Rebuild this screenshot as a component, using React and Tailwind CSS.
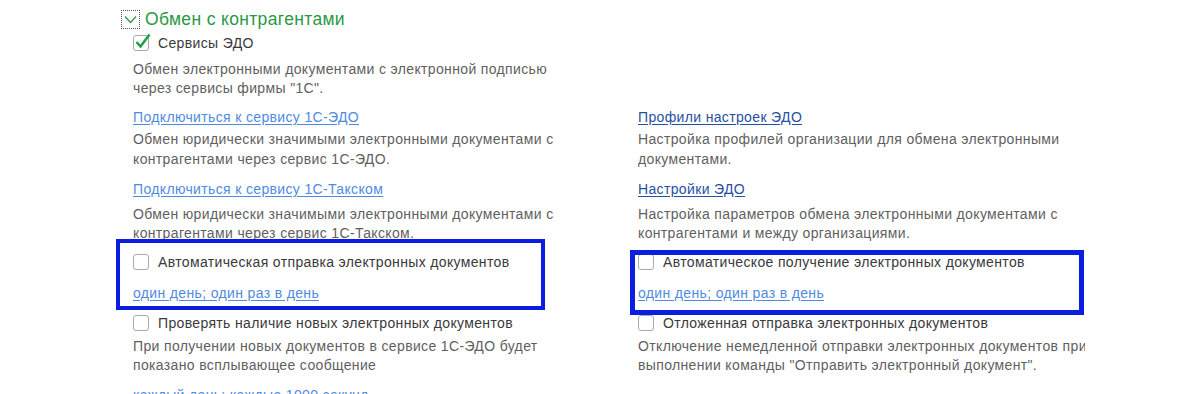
const font = { fontFamily: '"Liberation Sans", Arial, sans-serif' }

function Box({ checked }) {
  return (
    <span className="relative inline-block h-4 w-4 shrink-0 rounded-[3px] border border-[#a9a9a9] bg-white">
      {checked && (
        <svg className="absolute -left-[1px] -top-[4px]" width="19" height="19" viewBox="0 0 19 19">
          <path d="M3.5 10 L7.5 14.5 L16.5 2.5" fill="none" stroke="#21a047" strokeWidth="2.6" />
        </svg>
      )}
    </span>
  )
}

function Check({ label, checked }) {
  return (
    <div className="flex h-5 items-center gap-[9px] text-[14px] text-[#3a3a3a]">
      <Box checked={checked} />
      <span>{label}</span>
    </div>
  )
}

function Link({ children, dark }) {
  return (
    <div className={`flex h-5 items-center text-[14px] underline underline-offset-2 ${dark ? 'text-[#27509f] decoration-[#27509f]' : 'text-[#4f8be2] decoration-[#4f8be2]'}`}>
      {children}
    </div>
  )
}

function Desc({ children, lead = 'leading-[19px]' }) {
  return <div className={`whitespace-nowrap text-[14px] text-[#5f5f5f] ${lead}`}>{children}</div>
}

function Row({ mt, left, right }) {
  return (
    <div className={`grid grid-cols-[505px_447px] ${mt}`}>
      <div>{left}</div>
      <div className="overflow-hidden">{right}</div>
    </div>
  )
}

export default function App() {
  return (
    <div className="relative h-[394px] w-[1200px] overflow-hidden bg-white tracking-[0.35px]" style={font}>
      <div className="pl-[121px] pt-[8px]">
        <div className="flex h-[22px] items-center gap-[5px]">
          <span className="flex h-[19px] w-[19px] items-center justify-center border border-dotted border-[#555]">
            <svg width="13" height="9" viewBox="0 0 13 9">
              <path d="M1 1.5 L6.5 7.5 L12 1.5" fill="none" stroke="#2e9a4a" strokeWidth="1.4" />
            </svg>
          </span>
          <span className="text-[17.5px] text-[#2a9844]">Обмен с контрагентами</span>
        </div>
        <div className="pl-[12px]">
          <div className="mt-[3px]">
            <Check label="Сервисы ЭДО" checked />
          </div>
          <div className="mt-[7px]">
            <Desc>
              Обмен электронными документами с электронной подписью
              <br />
              через сервисы фирмы "1С".
            </Desc>
          </div>
          <Row
            mt="mt-[9px]"
            left={<Link>Подключиться к сервису 1С-ЭДО</Link>}
            right={<Link dark>Профили настроек ЭДО</Link>}
          />
          <Row
            mt="mt-[2px]"
            left={
              <Desc lead="leading-[20px]">
                Обмен юридически значимыми электронными документами с
                <br />
                контрагентами через сервис 1С-ЭДО.
              </Desc>
            }
            right={
              <Desc lead="leading-[20px]">
                Настройка профилей организации для обмена электронными
                <br />
                документами.
              </Desc>
            }
          />
          <Row
            mt="mt-[10px]"
            left={<Link>Подключиться к сервису 1С-Такском</Link>}
            right={<Link dark>Настройки ЭДО</Link>}
          />
          <Row
            mt="mt-[6px]"
            left={
              <Desc>
                Обмен юридически значимыми электронными документами с
                <br />
                контрагентами через сервис 1С-Такском.
              </Desc>
            }
            right={
              <Desc>
                Настройка параметров обмена электронными документами с
                <br />
                контрагентами и между организациями.
              </Desc>
            }
          />
          <Row
            mt="mt-[9px]"
            left={<Check label="Автоматическая отправка электронных документов" />}
            right={<Check label="Автоматическое получение электронных документов" />}
          />
          <Row
            mt="mt-[11px]"
            left={<Link>один день; один раз в день</Link>}
            right={<Link>один день; один раз в день</Link>}
          />
          <Row
            mt="mt-[10px]"
            left={<Check label="Проверять наличие новых электронных документов" />}
            right={<Check label="Отложенная отправка электронных документов" />}
          />
          <Row
            mt="mt-[4px]"
            left={
              <Desc>
                При получении новых документов в сервисе 1С-ЭДО будет
                <br />
                показано всплывающее сообщение
              </Desc>
            }
            right={
              <Desc>
                Отключение немедленной отправки электронных документов при
                <br />
                выполнении команды "Отправить электронный документ".
              </Desc>
            }
          />
          <Row mt="mt-[10px]" left={<Link>каждый день; каждые 1000 секунд</Link>} right={null} />
        </div>
      </div>

      <div className="pointer-events-none absolute left-[116px] top-[239px] h-[71px] w-[429px] border-[4px] border-[#0b1de0]" />
      <div className="pointer-events-none absolute left-[630px] top-[250px] h-[65px] w-[454px] border-[5px] border-[#0b1de0]" />
    </div>
  )
}
